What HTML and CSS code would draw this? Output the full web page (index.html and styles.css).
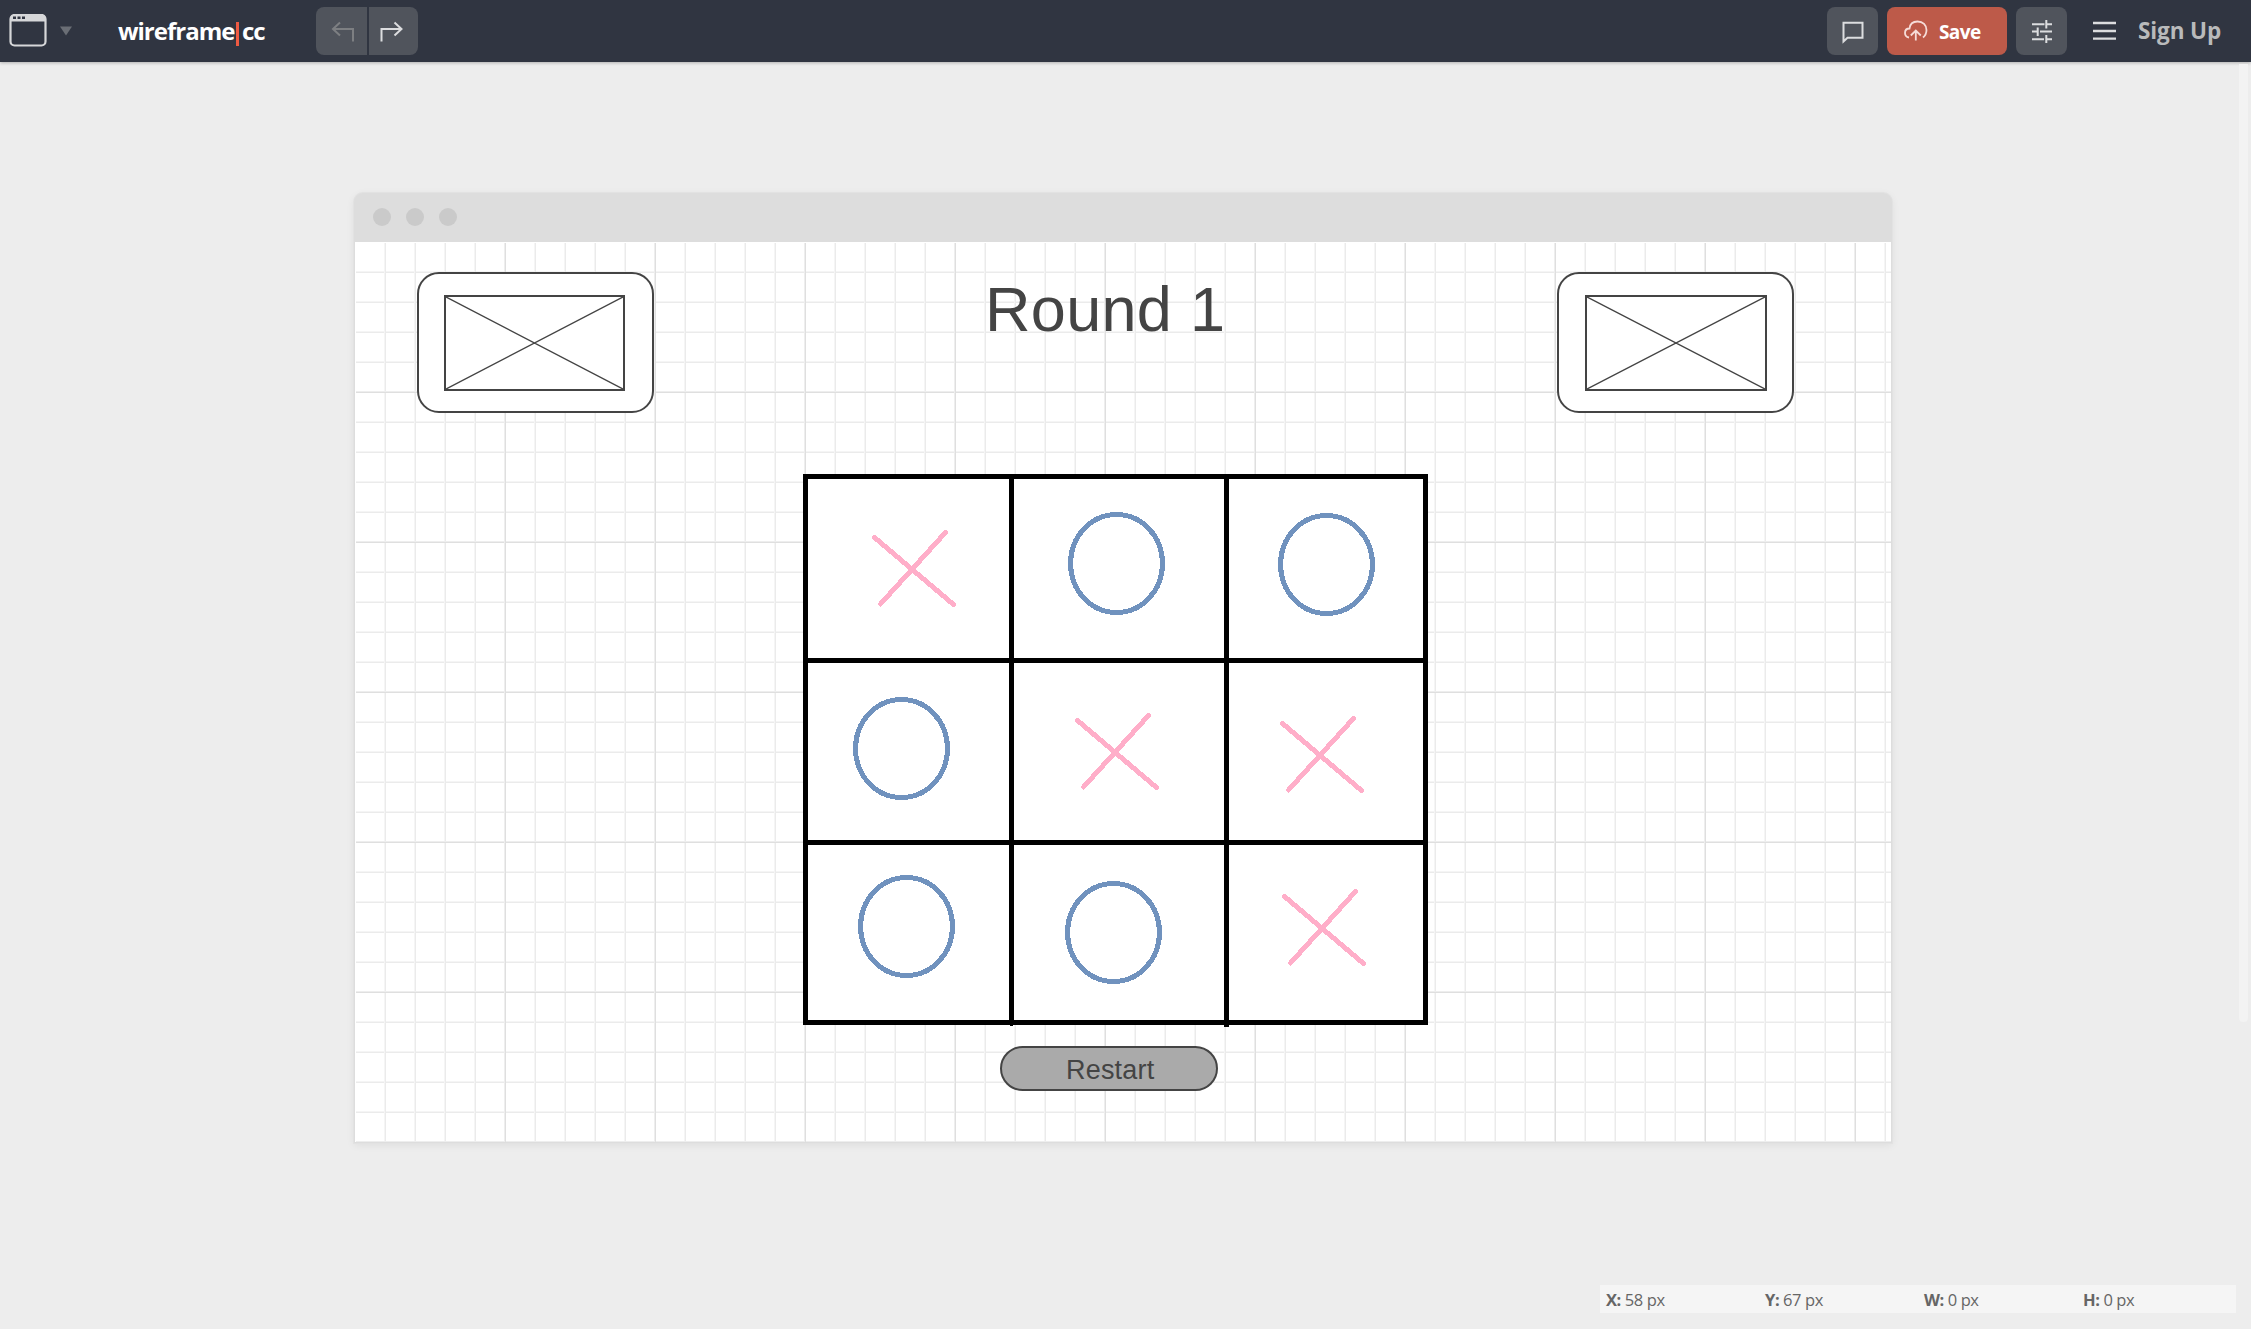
FILE: index.html
```html
<!DOCTYPE html>
<html lang="en">
<head>
<meta charset="utf-8">
<title>wireframe|cc</title>
<link rel="stylesheet" href="styles.css">
</head>
<body>
<svg class="defs" width="0" height="0" aria-hidden="true">
  <symbol id="mark-x" viewBox="0 0 84 78"><path d="M2.500 7.500 81.500 74.500M73.500 2.500 8.500 74"/></symbol>
  <symbol id="mark-o" viewBox="0 0 97 103"><ellipse cx="48.5" cy="51.5" rx="46" ry="49"/></symbol>
</svg>
<header class="topbar">
  <div class="side">
    <svg class="device" width="64" height="34" viewBox="0 0 64 34">
      <rect x="1.500" y="1" width="35" height="30.500" rx="4" fill="none" stroke="#d6d7d9" stroke-width="2.200"/>
      <path d="M1 7.500V5a4 4 0 0 1 4-4h28a4 4 0 0 1 4 4v2.500z" fill="#d6d7d9"/>
      <path d="M4 2.500h3v2.500H4zM8.500 2.500h3v2.500h-3zM13 2.500h3v2.500h-3z" fill="#303541"/>
      <path d="M51 12.500h12l-6 9z" fill="#6a6e75"/>
    </svg>
    <div class="logo"><span class="word">wireframe</span><i class="bar"></i><span class="word cc">cc</span></div>
    <div class="history">
      <button class="tool undo"><svg width="51" height="48" viewBox="0 0 51 48"><path d="M24 15.500 17 22l7 6.500M17 22h20v12.500"/></svg></button>
      <button class="tool redo"><svg width="49" height="48" viewBox="0 0 49 48"><path d="m25.500 15.500 7 6.500-7 6.500M32 22H12.500v12.500"/></svg></button>
    </div>
  </div>
  <div class="side">
    <button class="tool"><svg width="51" height="48" viewBox="0 0 51 48"><path d="M16.500 15.800h19v15h-15l-4 3.700z"/></svg></button>
    <button class="tool save">
      <svg width="24" height="22" viewBox="0 0 24 22"><path d="M5 17.500C2.500 17 1 15.500 1 13c0-2.800 2-4.500 4.500-4.500C6 4 9 1.500 13.500 1.500c5.500 0 9 3.700 9 8.500 0 3-1 5.500-3.500 7.500M11.800 20.500V10.500M6.800 15.500l5-5 5 5"/></svg>
      <span class="save-text">Save</span>
    </button>
    <button class="tool"><svg width="51" height="48" viewBox="0 0 51 48"><path d="M16 17.300h12.500M31 17.300h5M30.300 13v8.500M16 24.600h5M24 24.600h12M21.700 20.500v8.500M16 32.300h12M31 32.300h5M30.300 28v8"/></svg></button>
    <svg class="menu" width="23" height="20" viewBox="0 0 23 20"><path d="M0 2h23M0 10h23M0 17.700h23"/></svg>
    <a class="signup">Sign Up</a>
  </div>
</header>
<main class="stage">
  <section class="browser">
    <div class="titlebar"><i></i><i></i><i></i></div>
    <div class="canvas">
      <div class="card card-left"><svg width="181" height="96" viewBox="0 0 177 92"><path d="M0 0l177 92M177 0 0 92"/></svg></div>
      <div class="card card-right"><svg width="182" height="96" viewBox="0 0 178 92"><path d="M0 0l178 92M178 0 0 92"/></svg></div>
      <h1 class="title">Round 1</h1>
      <div class="board">
        <div class="cell"><svg class="x p1"><use href="#mark-x"/></svg></div>
        <div class="cell"><svg class="o p2"><use href="#mark-o"/></svg></div>
        <div class="cell"><svg class="o p3"><use href="#mark-o"/></svg></div>
        <div class="cell"><svg class="o p4"><use href="#mark-o"/></svg></div>
        <div class="cell"><svg class="x p5"><use href="#mark-x"/></svg></div>
        <div class="cell"><svg class="x p6"><use href="#mark-x"/></svg></div>
        <div class="cell"><svg class="o p7"><use href="#mark-o"/></svg></div>
        <div class="cell"><svg class="o p8"><use href="#mark-o"/></svg></div>
        <div class="cell"><svg class="x p9"><use href="#mark-x"/></svg></div>
      </div>
      <div class="restart">Restart</div>
    </div>
  </section>
</main>
<div class="scrollbar"></div>
<footer class="status">
  <div><b>X:</b> 58 px</div><div><b>Y:</b> 67 px</div><div><b>W:</b> 0 px</div><div><b>H:</b> 0 px</div>
</footer>
</body>
</html>
```
FILE: styles.css
```css
* { box-sizing: border-box; }
body {
  margin: 0;
  width: 2251px;
  height: 1329px;
  overflow: hidden;
  background: #ededed;
  font-family: "Open Sans", "Noto Sans", sans-serif;
}
.defs { position: absolute; }
svg { display: block; flex: none; }

.topbar {
  display: flex;
  justify-content: space-between;
  height: 62px;
  padding: 7px 29px 7px 9px;
  background: #303541;
  box-shadow: 0 1px 3px rgba(0, 0, 0, .25);
}
.side { display: flex; align-items: flex-start; }
.device { margin-top: 7px; }
.logo {
  display: flex;
  width: 243px;
  padding-left: 45px;
  color: #fff;
  font-size: 24px;
  line-height: 48px;
  font-weight: 700;
}
.word { width: 118px; letter-spacing: -1px; }
.cc { width: 24px; }
.bar { flex: none; width: 3px; height: 24px; margin: 15px 3px 0 0; background: #ee5a42; }
.history { display: flex; gap: 2px; }
.tool {
  display: block;
  height: 48px;
  padding: 0;
  border: 0;
  border-radius: 8px;
  background: #50545c;
}
.tool svg { fill: none; stroke: #dcdddf; stroke-width: 2; }
.undo { border-radius: 8px 0 0 8px; }
.tool.undo svg { stroke: #7d7f82; }
.redo { border-radius: 0 8px 8px 0; }
.save {
  display: flex;
  align-items: center;
  width: 120px;
  margin: 0 9px;
  padding-left: 17px;
  gap: 11px;
  background: #bd5a49;
}
.tool.save svg { stroke: #f6dcd8; stroke-width: 1.8; }
.save-text { color: #fff; font: 700 19px/46px "Open Sans", sans-serif; letter-spacing: -.6px; padding-top: 2px; }
.menu { margin: 14px 22px 0 26px; stroke: #dcdddf; stroke-width: 2.300; }
.signup { width: 84px; color: #b9babb; font-size: 22.500px; line-height: 47px; font-weight: 700; letter-spacing: -.1px; white-space: nowrap; }

.stage { display: flex; justify-content: center; padding: 131px 5px 0 0; }
.browser {
  width: 1538px;
  border-radius: 9px 9px 0 0;
  background: #ddd;
  box-shadow: 0 0 0 1px #e2e2e2, 0 2px 8px rgba(0, 0, 0, .07);
}
.titlebar { display: flex; gap: 15px; height: 49px; padding: 15px 0 0 19px; }
.titlebar i { width: 18px; height: 18px; border-radius: 50%; background: #cacaca; }
.canvas {
  position: relative;
  width: 1536px;
  height: 900px;
  margin: 0 1px 1px;
  background: #fff;
}
/* snapping grid: a faint line every 30px, a stronger one every 150px */
.canvas::before {
  content: "";
  position: absolute;
  inset: 1px 0 0 1px;
  background-image:
    linear-gradient(90deg, transparent 148px, #eee 148px 149px, #dfdfdf 149px),
    linear-gradient(transparent 148px, #eee 148px 149px, #dfdfdf 149px),
    linear-gradient(90deg, transparent 28px, #f5f5f5 28px 29px, #ebebeb 29px),
    linear-gradient(transparent 28px, #f5f5f5 28px 29px, #ebebeb 29px);
  background-size: 150px 150px, 150px 150px, 30px 30px, 30px 30px;
}
/* elements placed freely on the drawing canvas */
.card, .title, .board, .restart { position: absolute; }
.card {
  top: 30px;
  width: 237px;
  height: 141px;
  border: 2px solid #444;
  border-radius: 22px;
  background: #fff;
  padding: 21px 0 0 25px;
}
.card svg { border: 2px solid #444; fill: none; stroke: #444; stroke-width: 1.400; }
.card-left { left: 62px; }
.card-right { left: 1202px; padding-left: 26px; }
.title {
  left: 630px;
  top: 31px;
  margin: 0;
  color: #444;
  font: 400 63px/72px "Liberation Sans", Arial, sans-serif;
  letter-spacing: .3px;
}
.board {
  left: 448px;
  top: 232px;
  display: grid;
  grid-template: 179px 177px 175px / 201px 210px 194px;
  gap: 5px;
  padding: 5px;
  background: #000;
}
/* inner rules run slightly past the bottom edge */
.board::before, .board::after {
  content: "";
  position: absolute;
  top: 551px;
  width: 3px;
  height: 1px;
  background: #000;
}
.board::before { left: 207px; }
.board::after { left: 421px; width: 5px; height: 2px; }
.cell { background: #fff; }
.cell svg { fill: none; stroke-width: 5; shape-rendering: crispEdges; }
.x { width: 84px; height: 78px; stroke: #ffaec9; stroke-linecap: round; overflow: visible; }
.o { width: 97px; height: 103px; stroke: #7092be; }
.p1 { margin: 51px 0 0 64px; }
.p2 { margin: 33px 0 0 54px; }
.p3 { margin: 34px 0 0 49px; }
.p4 { margin: 34px 0 0 45px; }
.p5 { margin: 50px 0 0 61px; }
.p6 { margin: 53px 0 0 51px; }
.p7 { margin: 30px 0 0 50px; }
.p8 { margin: 36px 0 0 51px; }
.p9 { margin: 44px 0 0 53px; }
.restart {
  left: 645px;
  top: 804px;
  width: 218px;
  height: 45px;
  padding-left: 64px;
  border: 2px solid #444;
  border-radius: 23px;
  background: #aaa;
  color: #444;
  font: 27px/44px "Liberation Sans", Arial, sans-serif;
  letter-spacing: .2px;
}

.scrollbar {
  position: absolute;
  left: 2239px;
  top: 64px;
  width: 9px;
  height: 958px;
  border-radius: 0 0 4px 4px;
  background: #f3f3f3;
}
.status {
  position: absolute;
  left: 1600px;
  top: 1285px;
  display: grid;
  grid-template-columns: repeat(4, 159px);
  width: 636px;
  height: 28px;
  padding-left: 6px;
  background: #f5f5f5;
  color: #666;
  font-size: 16.500px;
  line-height: 30px;
  letter-spacing: -.4px;
}
```
